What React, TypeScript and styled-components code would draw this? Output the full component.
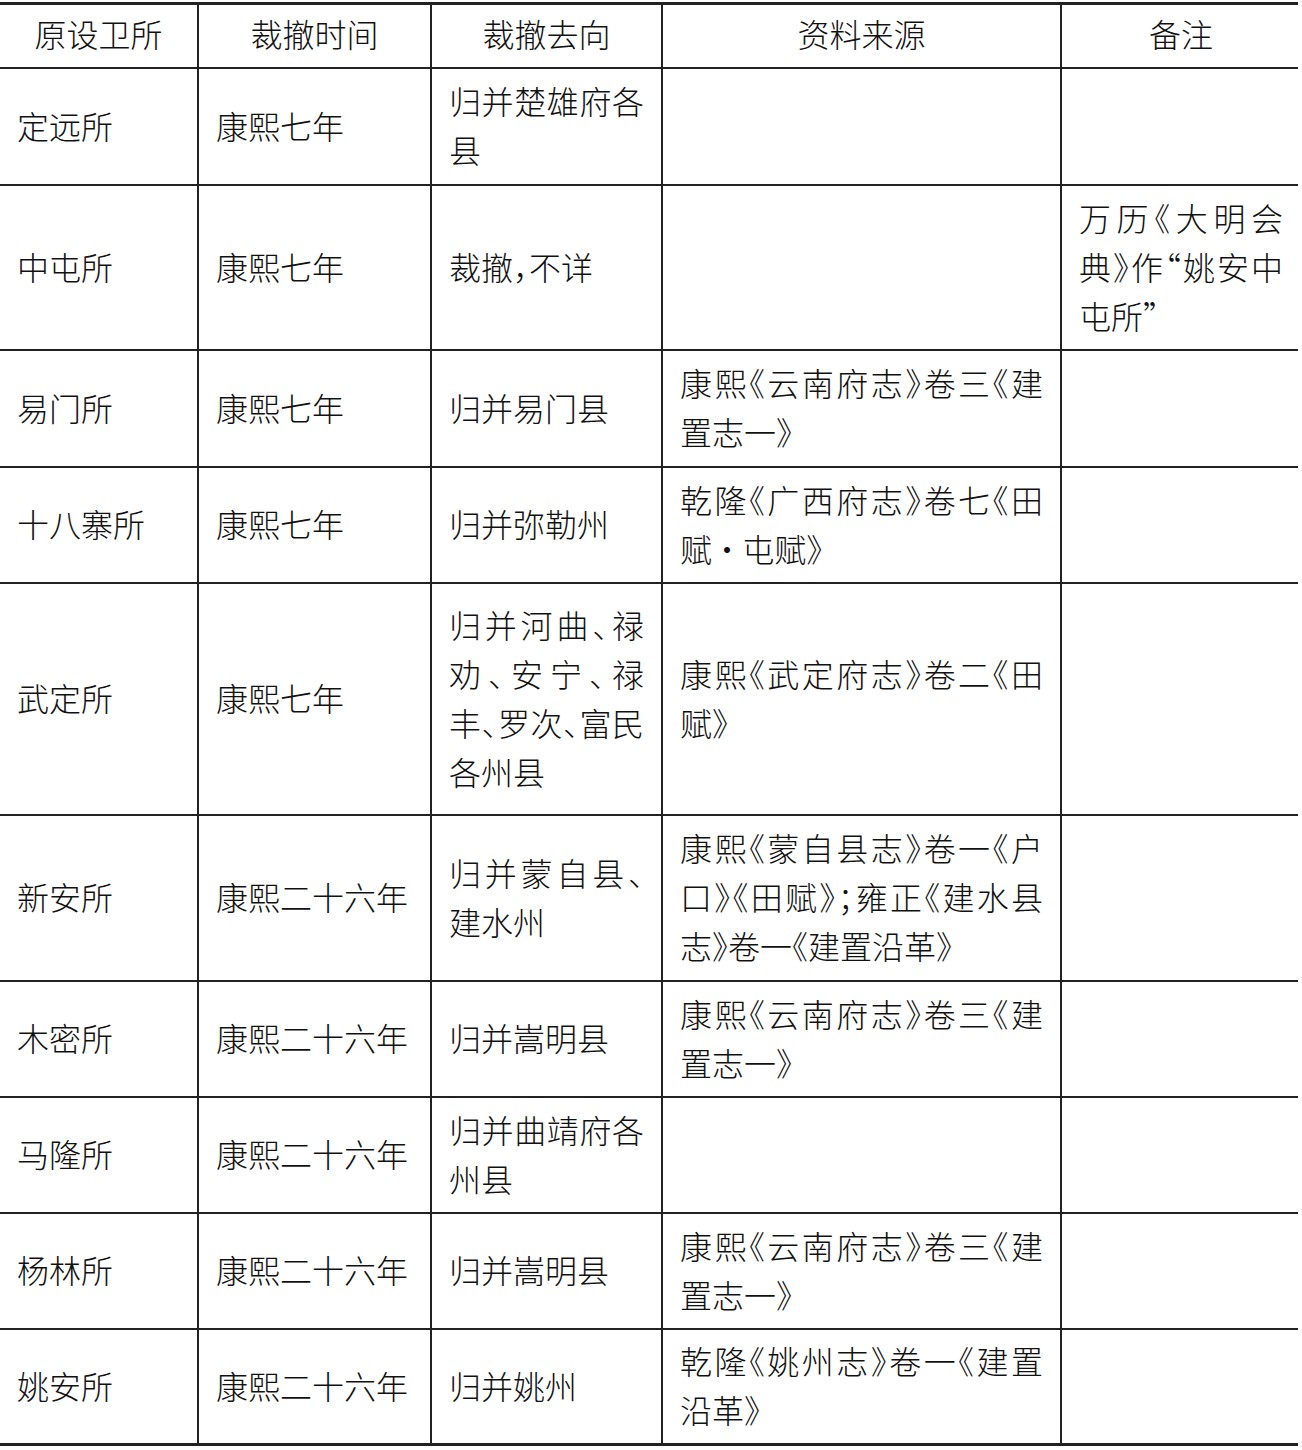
import styled, { createGlobalStyle } from "styled-components";

const GlobalStyle = createGlobalStyle`
    html, body {
        margin: 0;
        padding: 0;
        background: #fff;
    }
    body {
        font-family: "Noto Sans CJK SC", "Liberation Serif", serif;
        color: #111;
    }
`;

const Table = styled.div`
    width: 1298px;
    margin-top: 2px;
    border-top: 3px solid #222;
`;

const Row = styled.div<{ $h: number; $last?: boolean }>`
    display: grid;
    grid-template-columns: 199px 233px 231px 399px 236px;
    height: ${(p) => p.$h}px;
    box-sizing: border-box;
    border-bottom: ${(p) => (p.$last ? 3 : 2)}px solid #222;
`;

const Cell = styled.div<{ $head?: boolean }>`
    display: flex;
    flex-direction: column;
    justify-content: center;
    box-sizing: border-box;
    padding: 0 17px ${(p) => (p.$head ? 5 : 3)}px;
    border-right: 2px solid #222;
    font-size: 32px;
    line-height: 49px;
    font-weight: 300;
    font-feature-settings: "halt";
    text-align: ${(p) => (p.$head ? "center" : "left")};
    &:last-child {
        border-right: none;
        padding-right: 15px;
    }
`;

const Line = styled.span<{ $fill?: boolean }>`
    display: block;
    text-align: justify;
    text-align-last: ${(p) => (p.$fill ? "justify" : "auto")};
`;

type Text = string | string[];

interface Item {
    h: number;
    cells: Text[];
}

const heads = ["原设卫所", "裁撤时间", "裁撤去向", "资料来源", "备注"];

const yun = ["康熙《云南府志》卷三《建", "置志一》"];

const rows: Item[] = [
    { h: 117, cells: ["定远所", "康熙七年", ["归并楚雄府各", "县"], "", ""] },
    {
        h: 165,
        cells: ["中屯所", "康熙七年", "裁撤，不详", "", ["万历《大明会", "典》作“姚安中", "屯所”"]],
    },
    { h: 117, cells: ["易门所", "康熙七年", "归并易门县", yun, ""] },
    {
        h: 116,
        cells: ["十八寨所", "康熙七年", "归并弥勒州", ["乾隆《广西府志》卷七《田", "赋 · 屯赋》"], ""],
    },
    {
        h: 232,
        cells: [
            "武定所",
            "康熙七年",
            ["归并河曲、禄", "劝、安宁、禄", "丰、罗次、富民", "各州县"],
            ["康熙《武定府志》卷二《田", "赋》"],
            "",
        ],
    },
    {
        h: 166,
        cells: [
            "新安所",
            "康熙二十六年",
            ["归并蒙自县、", "建水州"],
            ["康熙《蒙自县志》卷一《户", "口》《田赋》；雍正《建水县", "志》卷一《建置沿革》"],
            "",
        ],
    },
    { h: 116, cells: ["木密所", "康熙二十六年", "归并嵩明县", yun, ""] },
    { h: 116, cells: ["马隆所", "康熙二十六年", ["归并曲靖府各", "州县"], "", ""] },
    { h: 116, cells: ["杨林所", "康熙二十六年", "归并嵩明县", yun, ""] },
    { h: 116, cells: ["姚安所", "康熙二十六年", "归并姚州", ["乾隆《姚州志》卷一《建置", "沿革》"], ""] },
];

const CellText = ({ text }: { text: Text }) => {
    if (typeof text === "string") return <Line>{text}</Line>;
    return (
        <>
            {text.map((t, i) => (
                <Line key={i} $fill={i < text.length - 1}>
                    {t}
                </Line>
            ))}
        </>
    );
};

const App: React.FC = () => {
    return (
        <>
            <GlobalStyle />
            <Table>
                <Row $h={64}>
                    {heads.map((t) => (
                        <Cell key={t} $head>
                            {t}
                        </Cell>
                    ))}
                </Row>
                {rows.map((r, i) => (
                    <Row key={i} $h={r.h} $last={i === rows.length - 1}>
                        {r.cells.map((c, j) => (
                            <Cell key={j}>
                                <CellText text={c} />
                            </Cell>
                        ))}
                    </Row>
                ))}
            </Table>
        </>
    );
};

export default App;
